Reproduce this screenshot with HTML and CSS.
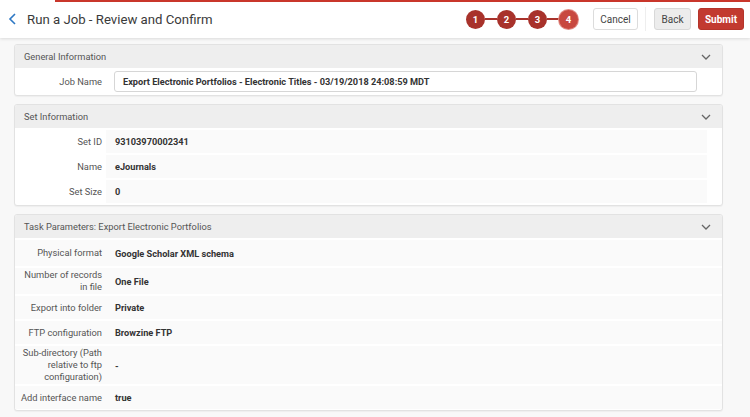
FILE: index.html
```html
<!DOCTYPE html>
<html>
<head>
<meta charset="utf-8">
<link rel="stylesheet" href="styles.css">
</head>
<body>
<div class="topline"></div>
<header class="header">
  <div class="title-wrap">
    <svg class="back-icon" width="10" height="14" viewBox="0 0 10 14"><path d="M7 2 L2 7 L7 12" fill="none" stroke="#2d78c4" stroke-width="1.6"/></svg>
    <span class="title">Run a Job - Review and Confirm</span>
  </div>
  <div class="actions">
    <div class="steps">
      <span class="step">1</span><span class="step-line"></span>
      <span class="step">2</span><span class="step-line"></span>
      <span class="step">3</span><span class="step-line"></span>
      <span class="step current">4</span>
    </div>
    <button class="btn btn-cancel">Cancel</button>
    <span class="sep"></span>
    <button class="btn btn-back">Back</button>
    <button class="btn btn-submit">Submit</button>
  </div>
</header>
<main class="content">
  <section class="panel">
    <div class="panel-head"><span>General Information</span><svg class="chev" width="10" height="6" viewBox="0 0 10 6"><path d="M1 1 L5 5 L9 1" fill="none" stroke="#666" stroke-width="1.3"/></svg></div>
    <div class="panel-body p1">
      <div class="row job-row">
        <div class="label">Job Name</div>
        <div class="input-cell"><div class="input">Export Electronic Portfolios - Electronic Titles - 03/19/2018 24:08:59 MDT</div></div>
      </div>
    </div>
  </section>
  <section class="panel">
    <div class="panel-head"><span>Set Information</span><svg class="chev" width="10" height="6" viewBox="0 0 10 6"><path d="M1 1 L5 5 L9 1" fill="none" stroke="#666" stroke-width="1.3"/></svg></div>
    <div class="panel-body p2">
      <div class="row"><div class="label">Set ID</div><div class="value">93103970002341</div></div>
      <div class="row"><div class="label">Name</div><div class="value">eJournals</div></div>
      <div class="row"><div class="label">Set Size</div><div class="value">0</div></div>
    </div>
  </section>
  <section class="panel">
    <div class="panel-head"><span>Task Parameters: Export Electronic Portfolios</span><svg class="chev" width="10" height="6" viewBox="0 0 10 6"><path d="M1 1 L5 5 L9 1" fill="none" stroke="#666" stroke-width="1.3"/></svg></div>
    <div class="panel-body p3">
      <div class="row first"><div class="label">Physical format</div><div class="value">Google Scholar XML schema</div></div>
      <div class="row"><div class="label">Number of records in file</div><div class="value">One File</div></div>
      <div class="row"><div class="label">Export into folder</div><div class="value">Private</div></div>
      <div class="row"><div class="label">FTP configuration</div><div class="value">Browzine FTP</div></div>
      <div class="row"><div class="label">Sub-directory (Path relative to ftp configuration)</div><div class="value">-</div></div>
      <div class="row"><div class="label">Add interface name</div><div class="value">true</div></div>
    </div>
  </section>
</main>
</body>
</html>
```

FILE: styles.css
```css
* { box-sizing: border-box; }
html, body { margin: 0; padding: 0; }
body {
  width: 750px;
  height: 417px;
  overflow: hidden;
  background: #f8f8f8;
  font-family: Roboto, "Liberation Sans", Arial, sans-serif;
  color: #333;
  position: relative;
}
.topline {
  position: absolute;
  top: 0;
  left: 55px;
  right: 0;
  height: 2px;
  background: #c9362b;
  z-index: 3;
}
.header {
  height: 38px;
  background: #fff;
  display: flex;
  align-items: center;
  justify-content: space-between;
  padding: 0 6px 0 8px;
  box-shadow: 0 1px 3px rgba(0,0,0,0.12);
  position: relative;
  z-index: 2;
}
.title-wrap { display: flex; align-items: center; gap: 9px; }
.back-icon { display: block; }
.title { font-size: 13.2px; color: #3a3a3a; }
.actions { display: flex; align-items: center; }
.steps { display: flex; align-items: center; margin-right: 15px; }
.step {
  width: 19px; height: 19px; border-radius: 50%;
  background: #a8322b;
  color: #fff;
  font-size: 9.5px;
  font-weight: 700;
  display: flex; align-items: center; justify-content: center;
}
.step.current { background: #c8483f; box-shadow: 0 0 0 1px #e08a83; }
.step-line { width: 12px; height: 2px; background: #a8322b; }
.btn {
  font-family: Roboto, "Liberation Sans", Arial, sans-serif;
  font-size: 10px;
  height: 22px;
  border-radius: 3px;
  padding: 0;
  cursor: pointer;
}
.btn-cancel { background: #fff; border: 1px solid #dcdcdc; color: #444; width: 45px; }
.sep { width: 1px; height: 24px; background: #eee; margin: 0 8px 0 7px; }
.btn-back { background: #ececec; border: 1px solid #d8d8d8; color: #444; width: 37px; margin-right: 7px; }
.btn-submit { background: #c23a30; border: 1px solid #b5342a; color: #fff; font-weight: 700; width: 46px; }

.content { padding: 6px 27px 0 14px; display: flex; flex-direction: column; gap: 8px; }
.panel {
  background: #fff;
  border: 1px solid #e2e2e2;
  border-radius: 3px;
  box-shadow: 0 1px 1px rgba(0,0,0,0.04);
  overflow: hidden;
}
.panel-head {
  height: 23px;
  background: #eeeeee;
  display: flex;
  align-items: center;
  justify-content: space-between;
  padding: 0 0 0 9px;
  font-size: 9.3px;
  color: #555;
}
.chev { margin-right: 11px; display: block; }
.panel-body { display: flex; flex-direction: column; gap: 2px; }
.row { display: flex; align-items: center; min-height: 23px; }
.label {
  width: 87px;
  flex: none;
  text-align: right;
  font-size: 9.3px;
  line-height: 12px;
  color: #555;
  padding: 1px 0 1px 3px;
}
.value {
  font-size: 9.2px;
  font-weight: 700;
  color: #333;
  padding-left: 13px;
}
.p1 { padding: 3px 0 3px; }
.job-row { min-height: 21px; }
.input-cell { flex: 1; padding: 0 25px 0 12px; }
.input {
  height: 21px;
  border: 1px solid #d6d6d6;
  border-radius: 3px;
  display: flex; align-items: center;
  padding-left: 8px;
  font-size: 9.2px;
  font-weight: 700;
  color: #333;
}
.p2 { padding: 2px 15px 2px 0; }
.p2 .row { min-height: 23px; }
.p2 .value { flex: 1; align-self: stretch; display: flex; align-items: center; background: #fafafa; margin-left: 4px; padding-left: 9px; }
.p3 { padding: 2px 0 1px; }
.p3 .row { background: #fafafa; }
.p3 .row.first { min-height: 26px; }
```
